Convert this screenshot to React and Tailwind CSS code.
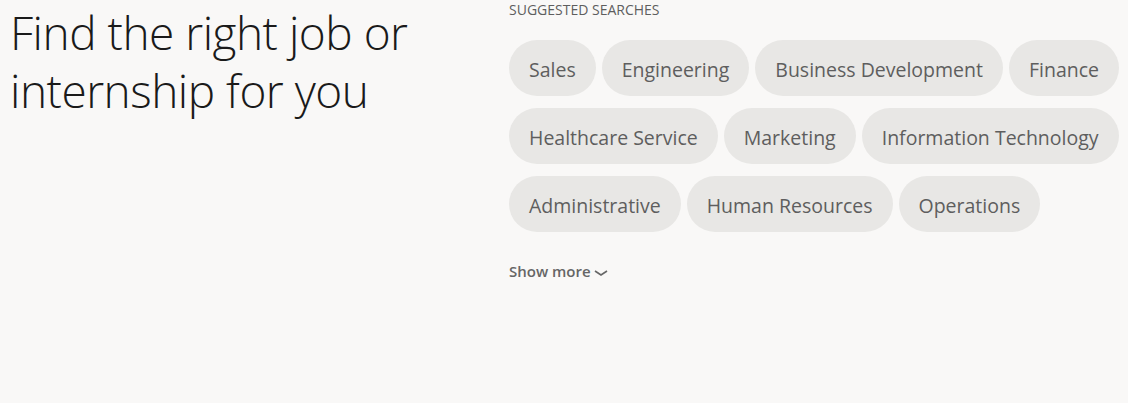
import React from 'react';

const searches = [
  'Sales',
  'Engineering',
  'Business Development',
  'Finance',
  'Healthcare Service',
  'Marketing',
  'Information Technology',
  'Administrative',
  'Human Resources',
  'Operations',
];

export default function App() {
  return (
    <div className="min-h-[403px] w-full overflow-hidden bg-[#f9f8f7] font-['Open_Sans',sans-serif]">
      <div className="flex">
        <div className="w-[499px] shrink-0 pl-[10px] pt-[3px]">
          <h1 className="text-[46px] leading-[58px] font-light text-[#1a1a1a] tracking-[-0.5px]">
            Find the right job or internship for you
          </h1>
        </div>

        <div className="flex-1 pl-[10px]">
          <h2 className="text-[14px] leading-[20px] text-[#5e5e5e] uppercase">
            Suggested searches
          </h2>
          <div className="mt-[20px] flex flex-wrap gap-x-[6px] gap-y-[12px] w-[619px]">
            {searches.map((s) => (
              <button
                key={s}
                className="h-[56px] rounded-full bg-[#e8e7e5] px-[20px] pt-[4px] text-[19.5px] text-[#5e5e5e]"
              >
                {s}
              </button>
            ))}
          </div>
          <button className="mt-[28px] flex items-center gap-[2px] text-[15px] font-semibold text-[#666666]">
            Show more
            <svg width="16" height="16" viewBox="0 0 16 16" className="mt-[3px]">
              <path d="M2 6 L8 10 L14 6" fill="none" stroke="#666666" strokeWidth="1.6" />
            </svg>
          </button>
        </div>
      </div>
    </div>
  );
}
